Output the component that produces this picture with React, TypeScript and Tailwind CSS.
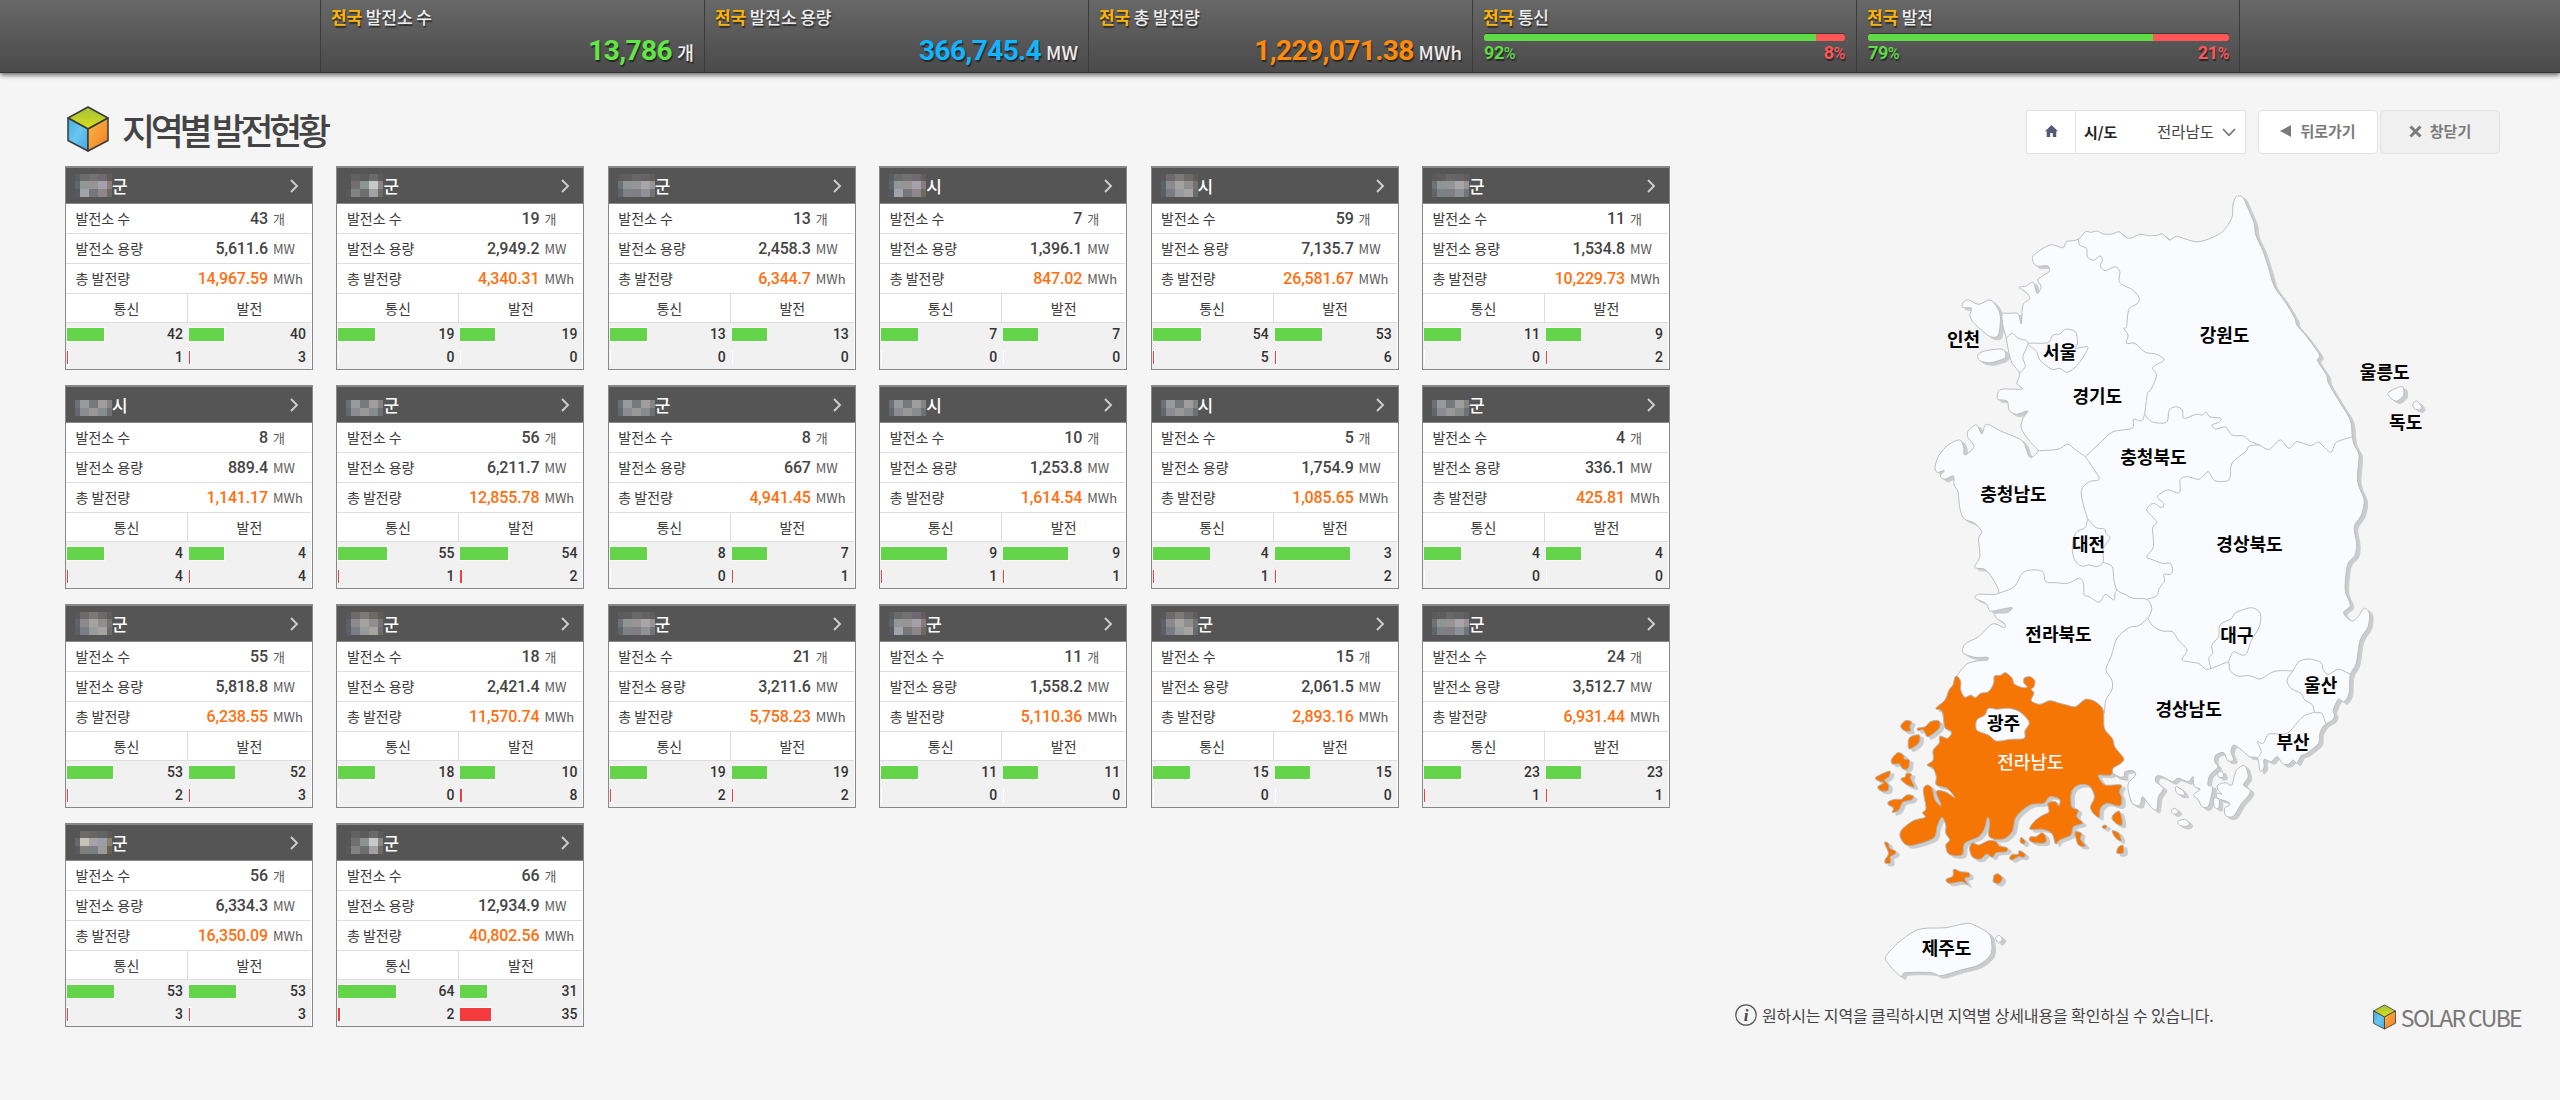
import React from "react";

type Region = {
  suffix: string;
  count: string;
  capacity: string;
  total: string;
  comm: [number, number];
  gen: [number, number];
  commBar: [number, number];
  genBar: [number, number];
  mask: string[][];
};

const M1 = [
  ["#5b5e60", "#6b6b6b", "#707371", "#6f6a72", "#625c5c"],
  ["#5f6568", "#8f9899", "#989494", "#a4a1ac", "#8b7c78"],
  ["#575960", "#a0a4a8", "#76777b", "#8f8689", "#6c6b5e"],
];
const M2 = [
  ["#565656", "#616161", "#5b5b5b", "#6a6a6a", "#5b5b5b"],
  ["#565656", "#6d706e", "#8c9490", "#c8c8c8", "#8c8683"],
  ["#5a5a5a", "#828282", "#6f6f6f", "#a2a2a2", "#6e6a66"],
];
const M3 = [
  ["#5b5b5b", "#5f5e5c", "#68686a", "#646264", "#5e5e5e"],
  ["#6b7375", "#8f9494", "#959595", "#a8a5aa", "#98938d"],
  ["#60656a", "#7c8184", "#807d85", "#8d9294", "#747474"],
];
const M4 = [
  ["#555555", "#555555", "#555555", "#555555", "#555555"],
  ["#6c7176", "#9a9999", "#77787c", "#9f9d9f", "#848480"],
  ["#626870", "#8b8c92", "#9a9896", "#868b8c", "#6f7070"],
];
const M5 = [
  ["#585858", "#6f6a6a", "#7c7979", "#6b6a66", "#5e5d5a"],
  ["#5c6368", "#8b8a8c", "#a5a39f", "#8f8f8f", "#75736f"],
  ["#5b5f64", "#7a7d84", "#989a9c", "#a7a4a0", "#6b6b6b"],
];
const M6 = [
  ["#555555", "#6b6b6a", "#676767", "#626365", "#5e5a56"],
  ["#626a6d", "#c6c3bb", "#a9a0a8", "#9c9ca4", "#87806f"],
  ["#595b5e", "#808079", "#7b7f89", "#9b9c9a", "#67634f"],
];

const r = (
  suffix: string,
  count: string,
  capacity: string,
  total: string,
  comm: [number, number],
  gen: [number, number],
  commBar: [number, number],
  genBar: [number, number],
  mask: string[][],
): Region => ({ suffix, count, capacity, total, comm, gen, commBar, genBar, mask });

const REGIONS: Region[] = [
  r("군", "43", "5,611.6", "14,967.59", [42, 1], [40, 3], [37, 1], [35, 1], M1),
  r("군", "19", "2,949.2", "4,340.31", [19, 0], [19, 0], [37, 0], [35, 0], M2),
  r("군", "13", "2,458.3", "6,344.7", [13, 0], [13, 0], [37, 0], [35, 0], M3),
  r("시", "7", "1,396.1", "847.02", [7, 0], [7, 0], [37, 0], [35, 0], M1),
  r("시", "59", "7,135.7", "26,581.67", [54, 5], [53, 6], [48, 1], [47, 1], M5),
  r("군", "11", "1,534.8", "10,229.73", [11, 0], [9, 2], [37, 0], [35, 1], M3),
  r("시", "8", "889.4", "1,141.17", [4, 4], [4, 4], [37, 1], [35, 1], M4),
  r("군", "56", "6,211.7", "12,855.78", [55, 1], [54, 2], [49, 1], [48, 2], M4),
  r("군", "8", "667", "4,941.45", [8, 0], [7, 1], [37, 0], [35, 1], M4),
  r("시", "10", "1,253.8", "1,614.54", [9, 1], [9, 1], [66, 1], [65, 1], M4),
  r("시", "5", "1,754.9", "1,085.65", [4, 1], [3, 2], [57, 1], [75, 1], M4),
  r("군", "4", "336.1", "425.81", [4, 0], [4, 0], [37, 0], [35, 0], M4),
  r("군", "55", "5,818.8", "6,238.55", [53, 2], [52, 3], [46, 1], [46, 1], M5),
  r("군", "18", "2,421.4", "11,570.74", [18, 0], [10, 8], [37, 0], [35, 2], M5),
  r("군", "21", "3,211.6", "5,758.23", [19, 2], [19, 2], [37, 1], [35, 1], M3),
  r("군", "11", "1,558.2", "5,110.36", [11, 0], [11, 0], [37, 0], [35, 0], M1),
  r("군", "15", "2,061.5", "2,893.16", [15, 0], [15, 0], [37, 0], [35, 0], M5),
  r("군", "24", "3,512.7", "6,931.44", [23, 1], [23, 1], [37, 1], [35, 1], M3),
  r("군", "56", "6,334.3", "16,350.09", [53, 3], [53, 3], [47, 1], [47, 1], M6),
  r("군", "66", "12,934.9", "40,802.56", [64, 2], [31, 35], [58, 2], [27, 31], M2),
];

/* ---------- Shared pieces ---------- */

function Cube({ className }: { className: string }) {
  return (
    <svg viewBox="0 0 42 46" className={className}>
      <defs>
        <linearGradient id="cubeTop" x1="0" y1="0" x2="0" y2="1">
          <stop offset="0" stopColor="#a3c03a" />
          <stop offset="1" stopColor="#dce01c" />
        </linearGradient>
        <linearGradient id="cubeLeft" x1="0" y1="0" x2="1" y2="1">
          <stop offset="0" stopColor="#43aee0" />
          <stop offset="0.5" stopColor="#6cc5f0" />
          <stop offset="1" stopColor="#3fa9e0" />
        </linearGradient>
        <linearGradient id="cubeRight" x1="0" y1="0" x2="1" y2="1">
          <stop offset="0" stopColor="#fbb94a" />
          <stop offset="1" stopColor="#f07c22" />
        </linearGradient>
      </defs>
      <g stroke="#3a3a3a" strokeWidth="1.5" strokeLinejoin="round">
        <path d="M21 1 L41 12 L21 23 L1 12 Z" fill="url(#cubeTop)" />
        <path d="M1 12 L21 23 V45 L1 34.5 Z" fill="url(#cubeLeft)" />
        <path d="M41 12 L21 23 V45 L41 34.5 Z" fill="url(#cubeRight)" />
      </g>
    </svg>
  );
}

/* ---------- Top summary bar ---------- */

function Cell({ label, children }: { label: string; children: React.ReactNode }) {
  return (
    <div className="h-full w-96 border-l border-[#3b3b3b] pl-[10px] pr-[10px] pt-[5px] [text-shadow:1px_2px_1px_rgba(0,0,0,0.5)]">
      <div className="h-6 text-[17px] leading-6 font-medium tracking-[-0.1px] text-[#eeeeee]">
        <span className="font-bold text-[#ffb400]">전국</span> {label}
      </div>
      {children}
    </div>
  );
}

function Big({ value, unit, color }: { value: string; unit: string; color: string }) {
  return (
    <div className="flex items-baseline justify-end gap-[5px] pt-px leading-[42px] text-[#eeeeee]">
      <span className={`font-[Roboto] text-[28px] font-bold tracking-[-0.6px] ${color}`}>{value}</span>
      <span className="text-[18.5px] font-medium">{unit}</span>
    </div>
  );
}

function Ratio({ good, bad, width }: { good: string; bad: string; width: string }) {
  return (
    <div className="px-px pt-[5px]">
      <div className="flex h-[7px] overflow-hidden rounded-[3px] bg-[#ff5757] shadow-[0_-1px_0_#3a3a3a]">
        <div className={`bg-[#5fdb45] ${width}`} />
      </div>
      <div className="flex justify-between font-[Roboto] text-[18px] leading-6 font-bold tracking-[-0.4px]">
        <span className="text-[#5fdb45]">
          {good}
          <span className="text-[16px] font-medium">%</span>
        </span>
        <span className="text-[#ff5757]">
          {bad}
          <span className="text-[16px] font-medium">%</span>
        </span>
      </div>
    </div>
  );
}

function TopBar() {
  return (
    <header className="flex h-[73px] justify-center border-b border-[#333] bg-linear-to-b from-[#686868] to-[#4a4a4a] shadow-[0_2px_5px_rgba(0,0,0,0.6)]">
      <Cell label="발전소 수">
        <Big value="13,786" unit="개" color="text-[#62e845]" />
      </Cell>
      <Cell label="발전소 용량">
        <Big value="366,745.4" unit="MW" color="text-[#10b4ff]" />
      </Cell>
      <Cell label="총 발전량">
        <Big value="1,229,071.38" unit="MWh" color="text-[#ff8a0c]" />
      </Cell>
      <Cell label="통신">
        <Ratio good="92" bad="8" width="w-[92%]" />
      </Cell>
      <Cell label="발전">
        <Ratio good="79" bad="21" width="w-[79%]" />
      </Cell>
      <div className="-ml-px w-px bg-[#3b3b3b]" />
    </header>
  );
}

/* ---------- Region card ---------- */

function Mask({ cells }: { cells: string[][] }) {
  return (
    <span className="grid grid-cols-[5px_9px_9px_9px_5px] grid-rows-[7px_8px_8px]">
      {cells.flat().map((c, i) => (
        <span key={i} style={{ backgroundColor: c }} />
      ))}
    </span>
  );
}

function Row({ label, value, unit, accent }: { label: string; value: string; unit: string; accent?: boolean }) {
  return (
    <div className="flex h-[30px] items-center border-b border-[#dddddd] text-[14px] text-[#3c3c3c]">
      <span className="pl-[9.5px]">{label}</span>
      <span
        className={`ml-auto font-[Roboto] text-[16px] font-medium tracking-[-0.15px] ${accent ? "text-[#ff6f0f]" : "text-[#444]"}`}
      >
        {value}
      </span>
      <span className="w-[43px] pl-[5px] text-[13px] text-[#5a5a5a]">{unit}</span>
    </div>
  );
}

function Stat({ bar, value, red }: { bar: number; value: number; red?: boolean }) {
  return (
    <div className="flex h-[23px] items-center">
      <div className="h-[15px] border-y border-r border-white">
        <div className={`h-[13px] ${red ? "bg-[#f53b3b]" : "bg-[#64d54a]"}`} style={{ width: bar }} />
      </div>
      <span className="ml-auto pr-[5px] font-[Roboto] text-[14px] font-medium text-[#333]">{value}</span>
    </div>
  );
}

function Card({ d }: { d: Region }) {
  return (
    <article className="h-[204px] w-[248px] border border-[#888] bg-white">
      <div className="-mx-px flex h-[37px] items-center border border-[#888] bg-[#555] pl-[9px]">
        <Mask cells={d.mask} />
        <span className="text-[17px] leading-none font-medium text-white">{d.suffix}</span>
        <svg viewBox="0 0 10 14" className="mr-[13px] ml-auto h-[14px] w-[10px]">
          <path d="M2 1 L8 7 L2 13" fill="none" stroke="#cfcfcf" strokeWidth="1.9" />
        </svg>
      </div>
      <div className="mr-px">
        <Row label="발전소 수" value={d.count} unit="개" />
        <Row label="발전소 용량" value={d.capacity} unit="MW" />
        <Row label="총 발전량" value={d.total} unit="MWh" accent />
        <div className="grid h-[29px] grid-cols-[122px_1fr] border-b border-[#dddddd] text-center text-[14px] leading-7 text-[#3c3c3c]">
          <span className="border-r border-[#dddddd]">통신</span>
          <span>발전</span>
        </div>
        <div className="grid h-[46px] grid-cols-[121px_1fr] gap-x-px bg-[#f1f1f1] pl-px">
          <Stat bar={d.commBar[0]} value={d.comm[0]} />
          <Stat bar={d.genBar[0]} value={d.gen[0]} />
          <Stat bar={d.commBar[1]} value={d.comm[1]} red />
          <Stat bar={d.genBar[1]} value={d.gen[1]} red />
        </div>
      </div>
    </article>
  );
}

/* ---------- Map ---------- */

const SX = 620 / 1568;
const SY = 1 / 3;

/* Turns "x,y x,y ..." into a lightly rounded path. */
function trace(src: string, closed: boolean, dy = 0): string {
  const pts = src
    .trim()
    .split(/\s+/)
    .map((p) => p.split(",").map(Number))
    .map(([x, y]) => [x * SX, (y + dy) * SY]);
  const n = pts.length;
  const at = (i: number) => (closed ? pts[(i + n) % n] : pts[Math.max(0, Math.min(n - 1, i))]);
  const f = (v: number) => v.toFixed(1);
  let d = `M${f(pts[0][0])} ${f(pts[0][1])}`;
  const last = closed ? n : n - 1;
  for (let i = 0; i < last; i++) {
    const [a, b, c, e] = [at(i - 1), at(i), at(i + 1), at(i + 2)];
    const k = 0.15;
    d += `C${f(b[0] + (c[0] - a[0]) * k)} ${f(b[1] + (c[1] - a[1]) * k)} ${f(c[0] - (e[0] - b[0]) * k)} ${f(c[1] - (e[1] - b[1]) * k)} ${f(c[0])} ${f(c[1])}`;
  }
  return closed ? d + "Z" : d;
}

const MAINLAND = `555,175 570,155 585,157 600,153 615,162 638,162 655,155 668,168 683,175 708,163 730,167 752,166 765,162 783,180 800,169 825,178 850,185 875,180 915,157 940,115 943,75 950,52 960,48 970,55 985,95 997,130 1001,165 1020,215 1035,270 1048,320 1075,365 1100,415 1105,435 1130,470 1162,525 1157,542 1180,585 1185,610 1215,670 1240,720 1245,770 1250,795 1262,825 1258,890 1262,920 1275,960 1268,1005 1250,1040 1256,1090 1252,1125 1233,1155 1227,1230 1240,1275 1223,1298 1243,1323 1260,1310 1275,1285 1288,1300 1285,1340 1265,1380 1255,1450 1240,1485 1237,1540 1224,1565 1210,1558 1197,1590 1200,1605 1195,1620 1175,1635 1163,1660 1160,1690 1130,1720 1115,1728 1105,1750 1095,1740 1085,1752 1070,1752 1055,1730 1040,1745 1022,1738 1022,1762 1012,1773 1005,1735 985,1730 965,1710 945,1695 938,1715 945,1740 930,1742 920,1718 900,1725 897,1745 905,1762 885,1785 880,1815 892,1820 888,1850 880,1880 865,1880 855,1858 843,1845 860,1828 845,1818 842,1790 830,1805 805,1795 790,1805 765,1790 750,1788 748,1805 767,1825 755,1850 750,1890 735,1880 715,1850 708,1875 690,1872 682,1850 678,1812 697,1785 690,1772 670,1775 668,1790 650,1790 640,1780 600,1740 400,1700 250,1600 240,1520 245,1490 250,1480 270,1452 300,1442 322,1440 322,1432 290,1432 262,1420 260,1405 270,1388 300,1370 335,1332 365,1343 365,1330 345,1315 343,1300 372,1298 385,1283 358,1288 330,1293 318,1270 292,1255 300,1243 350,1240 335,1195 315,1168 290,1162 303,1130 300,1075 308,1055 290,1030 262,1015 252,980 248,935 238,915 236,888 215,898 203,888 213,872 195,877 190,860 200,825 225,793 252,780 262,800 265,825 288,800 272,770 275,750 295,735 308,762 320,733 360,755 400,775 415,790 430,832 450,812 430,785 408,745 412,715 424,693 395,703 377,690 372,663 348,658 350,635 362,627 410,627 397,610 404,580 385,550 375,510 370,475 362,440 360,403 380,400 400,402 408,432 412,375 430,355 418,335 402,322 420,318 438,307 448,340 458,320 450,300 465,285 478,275 475,258 445,257 438,228 480,195 513,203 522,185 540,182`;

const ISLES: [string, number][] = [
  ["258,380 262,365 275,360 300,373 328,360 345,378 355,410 350,465 330,470 305,448 285,425 278,405 282,385 265,383", 0],
  ["298,525 315,513 358,507 368,520 365,535 330,548 303,542", 0],
  ["1335,640 1350,628 1372,620 1375,645 1358,663 1343,655", 0],
  ["1398,672 1408,663 1420,680 1415,690 1402,685", 0],
  ["965,318 975,320 982,350 970,375 987,390 982,408 965,430 945,468 925,467 922,445 935,435 930,425 905,415 902,400 915,402 905,390 905,375 925,368 940,375 950,335", 1440],
  ["895,415 908,418 907,445 896,440", 1440],
  ["905,340 915,333 920,350 908,352", 1440],
  ["800,380 815,390 822,405 805,403 798,390", 1440],
  ["788,450 797,445 805,455 798,462 790,460", 1440],
  ["803,485 820,478 832,488 828,498 812,498", 1440],
  ["65,890 95,850 135,815 165,805 215,803 265,791 285,793 325,820 333,850 330,885 300,915 255,930 205,947 180,938 115,938 105,950 85,930 72,912", 1440],
  ["343,835 352,826 360,838 350,848", 1440],
];

const BORDERS: string[] = [
  "370,475 385,460 400,475 425,487 412,530 418,560 402,580",
  "553,175 555,195 573,205 575,230 590,241 607,228 613,240 608,258 620,272 645,260 657,275 657,308 690,330 706,355 700,372 680,388 674,440 667,445 678,465 674,490 695,490 722,517 748,522 769,540 740,562 750,587 735,630 727,640 720,703",
  "720,703 712,723 692,718 688,745 640,755 610,785 570,830",
  "450,812 500,808 525,792 540,805 570,830",
  "720,703 738,725 775,727 782,690 800,680 815,690 819,715 850,703 865,705 875,696 885,710 912,715 908,727 890,735 900,747 925,741 940,765 970,768 985,783 1010,795",
  "1010,795 1035,808 1063,780 1085,805 1105,785 1140,797 1160,787 1190,817 1205,787 1245,770",
  "1010,795 985,798 975,815 945,843 937,865 937,885 930,902 897,902 880,875 858,898 830,890 810,898 808,938 778,930 752,950 768,970 762,983 742,970 725,990 750,1025 740,1045 742,1100 725,1130 735,1137 765,1150 785,1150 790,1170 785,1183 768,1183 770,1203 757,1225 750,1248 725,1258",
  "570,830 590,865 605,898 580,905 560,930 565,975 577,1020",
  "350,1240 390,1220 415,1175 460,1173 470,1205 495,1208 525,1210 555,1195 565,1210 567,1245 580,1250 605,1267 620,1243 642,1260 645,1240 650,1230",
  "615,1147 638,1160 642,1200 650,1230 670,1243 690,1255 725,1258 738,1285 728,1315",
  "728,1315 705,1337 680,1343 650,1375 635,1430 622,1470 637,1500 637,1530 622,1560 618,1600",
  "728,1315 740,1337 765,1353 790,1355 805,1380 827,1410 815,1440 855,1450 880,1468 930,1447 935,1470 955,1488 985,1487 1012,1497 1040,1478 1060,1472 1095,1473",
  "888,1467 882,1435 892,1420 890,1395 907,1370 910,1335 940,1315 950,1298 990,1283 1012,1300 1010,1340 990,1380 978,1420 965,1425 945,1415 935,1435 932,1450",
  "1095,1473 1110,1445 1135,1437 1165,1447 1172,1470 1185,1483 1210,1468 1240,1483",
  "1095,1473 1080,1500 1090,1525 1115,1540 1125,1560 1145,1575 1150,1597 1168,1600 1178,1630",
  "1150,1597 1120,1610 1080,1660 1035,1662 1020,1690 1005,1685 1015,1715 1005,1735",
  "640,1780 665,1798 680,1800",
];

const SEOUL = "428,490 475,488 488,465 505,462 520,448 545,455 550,490 545,505 575,500 570,520 550,555 525,577 505,565 485,568 455,540 447,515 432,500";
const DAEJEON = "577,1020 597,1043 618,1047 622,1060 632,1075 615,1105 615,1145 600,1160 580,1155 560,1158 543,1140 537,1105 545,1060 570,1042";
const GWANGJU = "325,145 345,148 375,145 400,153 418,170 428,190 417,212 415,235 380,238 345,243 325,225 297,212 293,195 297,178 316,165";

const JEONNAM = `247,50 255,65 255,90 265,112 280,105 292,113 305,100 325,95 338,70 340,48 355,46 368,38 385,55 390,72 412,83 423,80 415,70 415,55 430,50 442,62 440,80 433,88 440,100 433,122 455,133 480,122 505,130 520,134 545,140 570,118 595,125 615,150 618,205 638,235 645,262 667,295 660,310 640,325 635,345 605,345 605,355 620,375 660,375 656,395 662,415 657,438 625,430 608,445 605,472 590,460 583,440 593,410 580,378 553,375 535,395 535,440 552,450 548,470 563,490 540,500 533,525 505,540 495,552 485,520 460,508 430,508 440,485 460,467 478,455 475,430 495,425 503,438 505,418 480,410 465,430 430,435 395,470 385,515 360,538 327,530 328,490 323,472 315,505 300,530 265,550 258,585 225,583 217,555 227,540 217,520 217,495 207,472 195,500 185,535 125,557 103,535 105,510 135,482 165,472 158,458 167,445 160,390 170,375 182,385 190,420 205,437 193,395 215,395 240,413 220,385 193,375 193,350 185,325 170,315 185,300 185,270 200,250 202,228 222,235 232,215 215,203 208,155 192,145 215,120 225,90 235,75 240,52`;

const JEONNAM_ISLES: string[] = [
  "103,198 115,182 130,185 126,200 128,213 112,212",
  "145,205 165,200 178,185 200,183 200,205 172,230 160,210 148,212",
  "128,230 150,225 148,250 125,267 122,245",
  "80,298 95,278 110,285 112,297 125,300 122,325 108,327 100,312 82,312",
  "42,350 75,333 73,350 62,360 72,375 70,392 52,392 45,380 60,368 42,360",
  "103,357 115,350 117,340 130,342 128,355 137,380 120,375",
  "72,425 88,418 105,418 118,405 135,408 130,420 108,427 98,450 82,458 85,443 72,435",
  "62,548 72,550 75,565 90,573 88,583 77,590 77,608 64,610 64,598 72,580",
  "277,565 285,548 300,555 325,542 345,545 352,558 372,563 370,575 345,578 335,592 320,582 305,597 285,592",
  "378,595 385,583 400,583 403,572 417,582 415,592 400,590 385,600",
  "405,545 408,532 418,545 413,552",
  "428,540 432,530 445,530 460,518 470,530 468,548 440,548",
  "545,515 560,520 558,538 570,558 553,556 545,530",
  "640,465 655,453 662,475 662,495 650,492 638,478",
  "638,512 655,520 660,543 645,532",
  "612,500 620,495 625,500 618,507",
  "650,580 653,562 665,556 666,578",
  "218,658 235,648 237,628 255,635 275,638 277,650 265,655 272,675 258,665 225,670",
  "337,657 340,645 350,642 360,655 352,670 338,667",
];

const LABELS: [string, number, number][] = [
  ["인천", 262, 477],
  ["강원도", 922, 466],
  ["서울", 505, 518],
  ["경기도", 600, 648],
  ["울릉도", 1327, 577],
  ["독도", 1380, 727],
  ["충청북도", 742, 832],
  ["충청남도", 388, 942],
  ["대전", 578, 1092],
  ["경상북도", 985, 1092],
  ["대구", 953, 1366],
  ["전라북도", 502, 1363],
  ["울산", 1165, 1516],
  ["경상남도", 831, 1588],
  ["부산", 1095, 1687],
  ["광주", 363, 1630],
  ["전라남도", 431, 1747],
  ["제주도", 219, 2305],
];

const LAND = [trace(MAINLAND, true), ...ISLES.map(([s, dy]) => trace(s, true, dy))].join("");
const SELECTED = [trace(JEONNAM, true, 1440), ...JEONNAM_ISLES.map((s) => trace(s, true, 1440))].join("");

function KoreaMap() {
  return (
    <svg viewBox="0 0 620 830" className="h-[830px] w-[620px]">
      <g fill="#cbcccd" stroke="#cbcccd" strokeWidth="1" transform="translate(3.5 2.5)">
        <path d={LAND} />
        <path d={SELECTED} />
      </g>
      <g fill="#fafbfe" stroke="#bcbdc0" strokeWidth="1" strokeLinejoin="round">
        <path d={LAND} />
        <path d={trace(SEOUL, true)} />
        <path d={trace(DAEJEON, true)} />
        {BORDERS.map((b) => (
          <path key={b} d={trace(b, false)} fill="none" />
        ))}
        <path d={SELECTED} fill="#f57505" stroke="#b9b2ab" />
        <path d={trace(GWANGJU, true, 1440)} />
      </g>
      {LABELS.map(([name, x, y]) => (
        <text
          key={name}
          x={x * SX}
          y={y * SY + 6.5}
          textAnchor="middle"
          fontSize="18"
          fontWeight={name === "전라남도" ? 500 : 700}
          fill={name === "전라남도" ? "#fff" : "#000"}
        >
          {name}
        </text>
      ))}
    </svg>
  );
}

/* ---------- Toolbar ---------- */

function Toolbar() {
  return (
    <div className="ml-[291px] flex h-11 text-[15px]">
      <div className="flex w-[220px] border border-[#e2e2e2] bg-white">
        <div className="flex w-[49px] items-center justify-center border-r border-[#e2e2e2]">
          <svg viewBox="0 0 13 12" className="-mt-[2px] h-3 w-[13px]">
            <path d="M6.5 0 L13 6.3 H11.3 V12 H7.8 V8 H5.2 V12 H1.7 V6.3 H0 Z" fill="#555a78" />
          </svg>
        </div>
        <div className="flex grow items-center pr-[9px] pl-[8px]">
          <span className="font-bold text-[#222]">시/도</span>
          <span className="ml-auto text-[15.5px] text-[#444]">전라남도</span>
          <svg viewBox="0 0 14 9" className="ml-[8px] h-[9px] w-[14px]">
            <path d="M1 1 L7 7.3 L13 1" fill="none" stroke="#777" strokeWidth="1.8" />
          </svg>
        </div>
      </div>
      <div className="ml-3 flex w-[120px] items-center justify-center gap-[9px] rounded-sm border border-[#e2e2e2] bg-white pb-[2px] font-bold text-[#7b7b7b]">
        <svg viewBox="0 0 11 12" className="h-3 w-[11px]">
          <path d="M11 0 V12 L0 6 Z" fill="#7b7b7b" />
        </svg>
        뒤로가기
      </div>
      <div className="ml-[2px] flex w-[120px] items-center justify-center gap-2 rounded-sm border border-[#e2e2e2] bg-[#f0f0f0] pb-[2px] font-bold text-[#7b7b7b]">
        <svg viewBox="0 0 13 13" className="h-[13px] w-[13px]">
          <path d="M1.5 1.5 L11.5 11.5 M11.5 1.5 L1.5 11.5" stroke="#7b7b7b" strokeWidth="3" />
        </svg>
        창닫기
      </div>
    </div>
  );
}

export default function App() {
  return (
    <div className="h-[1100px] w-[2560px] overflow-hidden bg-[#f5f5f5] font-['Noto_Sans_CJK_KR','Noto_Sans',sans-serif]">
      <TopBar />
      <main className="flex pl-[65px]">
        <section className="w-[1670px]">
          <div className="flex h-[93px] items-center gap-[13px] pt-[19px] pl-[2px]">
            <Cube className="h-[46px] w-[42px]" />
            <h1 className="text-[36px] leading-none font-medium tracking-[-4.4px] text-[#444]">지역별 발전현황</h1>
          </div>
          <div className="grid w-[1605px] grid-cols-6 gap-x-[23.4px] gap-y-[15px]">
            {REGIONS.map((d, i) => (
              <Card key={i} d={d} />
            ))}
          </div>
        </section>
        <section className="w-[825px] pt-[37px]">
          <Toolbar />
          <div className="mt-[26px] ml-[125px] h-[820px]">
            <KoreaMap />
          </div>
          <div className="flex items-center">
            <svg viewBox="0 0 22 22" className="h-[22px] w-[22px]">
              <circle cx="11" cy="11" r="10.2" fill="none" stroke="#555" strokeWidth="1.2" />
              <text
                x="11"
                y="17"
                textAnchor="middle"
                fontFamily="Liberation Serif, serif"
                fontStyle="italic"
                fontWeight="700"
                fontSize="17"
                fill="#444"
              >
                i
              </text>
            </svg>
            <p className="pl-[5px] text-[16px] leading-6 tracking-[-0.13px] text-[#444]">
              원하시는 지역을 클릭하시면 지역별 상세내용을 확인하실 수 있습니다.
            </p>
            <div className="mr-[39px] ml-auto flex items-center gap-[5px] pt-1">
              <Cube className="h-[26px] w-[23px]" />
              <span className="text-[23px] leading-[26px] tracking-[-1.65px] text-[#777]">SOLAR CUBE</span>
            </div>
          </div>
        </section>
      </main>
    </div>
  );
}
